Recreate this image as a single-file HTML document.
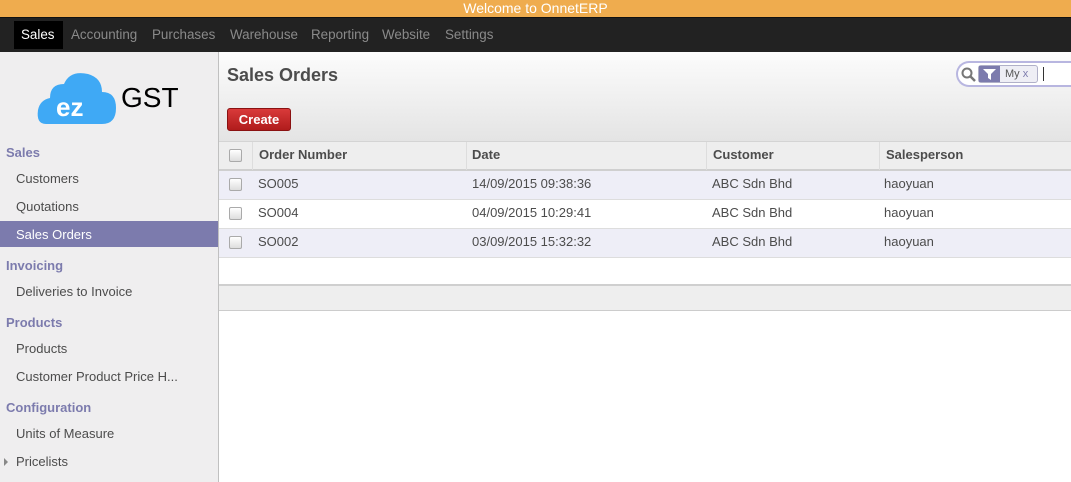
<!DOCTYPE html><html><head><style>
*{margin:0;padding:0;box-sizing:border-box}
body{width:1071px;height:482px;overflow:hidden;font-family:"Liberation Sans",Arial,sans-serif;font-size:13px;color:#4c4c4c;position:relative;background:#fff}
.a{position:absolute}
.top{left:0;top:0;width:1071px;height:17px;background:#efac4e;color:#fff;text-align:center;font-size:14px;line-height:16px}
.nav{left:0;top:17px;width:1071px;height:35px;background:#222;border-top:1px solid #111}
.nav span{position:absolute;top:9px;color:#8a8a8a;font-size:13.4px}
.side{left:0;top:52px;width:219px;height:430px;background:#efeeef;border-right:1px solid #c0c0c0}
.h{color:#7c7bad;font-weight:bold;font-size:13px;left:6px}
.i{left:16px;color:#4c4c4c}
.hdr{left:219px;top:52px;width:852px;height:89px;background:linear-gradient(#fcfcfc,#e4e4e4)}
.th{left:219px;top:141px;width:852px;height:30px;background:#eee;border-top:1px solid #d4d4d4;border-bottom:2px solid #cfcfcf}
.row{left:219px;width:852px;height:29px;border-bottom:1px solid #ddd}
.cb{width:13px;height:13px;border:1px solid #aaa;border-radius:2px;background:linear-gradient(#fff,#ddd);position:absolute;left:10px;top:7px}
.c{position:absolute;top:5px}
</style></head><body>
<div class="a top">Welcome to OnnetERP</div>
<div class="a nav">
<div style="position:absolute;left:14px;top:3px;width:49px;height:28px;background:#000"></div>
<span style="left:21px;color:#fff">Sales</span><span style="left:71px">Accounting</span><span style="left:152px">Purchases</span><span style="left:230px">Warehouse</span><span style="left:311px">Reporting</span><span style="left:382px">Website</span><span style="left:445px">Settings</span></div>
<div class="a side">
<svg class="a" style="left:36px;top:18px" width="84" height="56"><path d="M10 54 Q0 54 2 40 Q4 30 14 28 Q14 14 28 14 Q34 0 52 4 Q66 8 66 22 Q80 22 80 38 Q80 54 66 54Z" fill="#3fa9f5"/><text x="20" y="46" font-family="Liberation Sans" font-weight="bold" font-size="26" fill="#fff">ez</text></svg>
<div class="a" style="left:121px;top:30px;font-size:28px;color:#000">GST</div>
<div class="a h" style="top:93px">Sales</div>
<div class="a i" style="top:119px">Customers</div>
<div class="a i" style="top:147px">Quotations</div>
<div class="a" style="left:0;top:169px;width:218px;height:26px;background:#7c7bad"></div>
<div class="a i" style="top:175px;color:#fff">Sales Orders</div>
<div class="a h" style="top:206px">Invoicing</div>
<div class="a i" style="top:232px">Deliveries to Invoice</div>
<div class="a h" style="top:263px">Products</div>
<div class="a i" style="top:289px">Products</div>
<div class="a i" style="top:317px">Customer Product Price H...</div>
<div class="a h" style="top:348px">Configuration</div>
<div class="a i" style="top:374px">Units of Measure</div>
<div class="a" style="left:4px;top:406px;width:0;height:0;border-left:4px solid #888;border-top:4px solid transparent;border-bottom:4px solid transparent"></div>
<div class="a i" style="top:402px">Pricelists</div>
</div>
<div class="a hdr">
<div class="a" style="left:8px;top:13px;font-size:18px;font-weight:bold;color:#4c4c4c">Sales Orders</div>
<div class="a" style="left:8px;top:56px;width:64px;height:23px;background:linear-gradient(#d93a3a,#b01c1c);border:1px solid #8a1111;border-radius:3px;color:#fff;text-align:center;line-height:21px;font-size:13px;font-weight:bold">Create</div>
<div class="a" style="left:737px;top:9px;width:130px;height:26px;border:2px solid #b8b6e0;border-right:none;border-radius:13px 0 0 13px;background:#fff">
<svg class="a" style="left:3px;top:4px" width="16" height="16"><circle cx="6" cy="6" r="4.5" stroke="#777" stroke-width="2" fill="none"/><path d="M9 9l5 5" stroke="#777" stroke-width="2.5"/></svg>
<div class="a" style="left:20px;top:2px;width:60px;height:18px;border:1px solid #b0b0c8;border-radius:3px;background:#eeeef5"><div class="a" style="left:0;top:0;width:21px;height:16px;background:#7c7bad"></div><svg class="a" style="left:4px;top:3px" width="13" height="11"><path d="M0 0h13l-5 5v6l-3-2v-4z" fill="#fff"/></svg><span class="a" style="left:26px;top:2px;font-size:11px;color:#555">My <span style="color:#7c7bad">x</span></span></div>
<div class="a" style="left:85px;top:4px;width:1px;height:14px;background:#333"></div></div>
</div>
<div class="a th"><div class="cb"></div>
<div class="a" style="left:33px;top:0;width:1px;height:28px;background:#ddd"></div>
<div class="a" style="left:247px;top:0;width:1px;height:28px;background:#ddd"></div>
<div class="a" style="left:487px;top:0;width:1px;height:28px;background:#ddd"></div>
<div class="a" style="left:660px;top:0;width:1px;height:28px;background:#ddd"></div>
<b class="c" style="left:40px">Order Number</b><b class="c" style="left:253px">Date</b><b class="c" style="left:494px">Customer</b><b class="c" style="left:667px">Salesperson</b></div>
<div class="a row" style="top:171px;background:#eeeef7"><div class="cb"></div><span class="c" style="left:39px">SO005</span><span class="c" style="left:253px">14/09/2015 09:38:36</span><span class="c" style="left:493px">ABC Sdn Bhd</span><span class="c" style="left:665px">haoyuan</span></div>
<div class="a row" style="top:200px"><div class="cb"></div><span class="c" style="left:39px">SO004</span><span class="c" style="left:253px">04/09/2015 10:29:41</span><span class="c" style="left:493px">ABC Sdn Bhd</span><span class="c" style="left:665px">haoyuan</span></div>
<div class="a row" style="top:229px;background:#eeeef7"><div class="cb"></div><span class="c" style="left:39px">SO002</span><span class="c" style="left:253px">03/09/2015 15:32:32</span><span class="c" style="left:493px">ABC Sdn Bhd</span><span class="c" style="left:665px">haoyuan</span></div>
<div class="a" style="left:219px;top:284px;width:852px;height:27px;background:#eee;border-top:2px solid #cfcfcf;border-bottom:1px solid #ccc"></div>
</body></html>
